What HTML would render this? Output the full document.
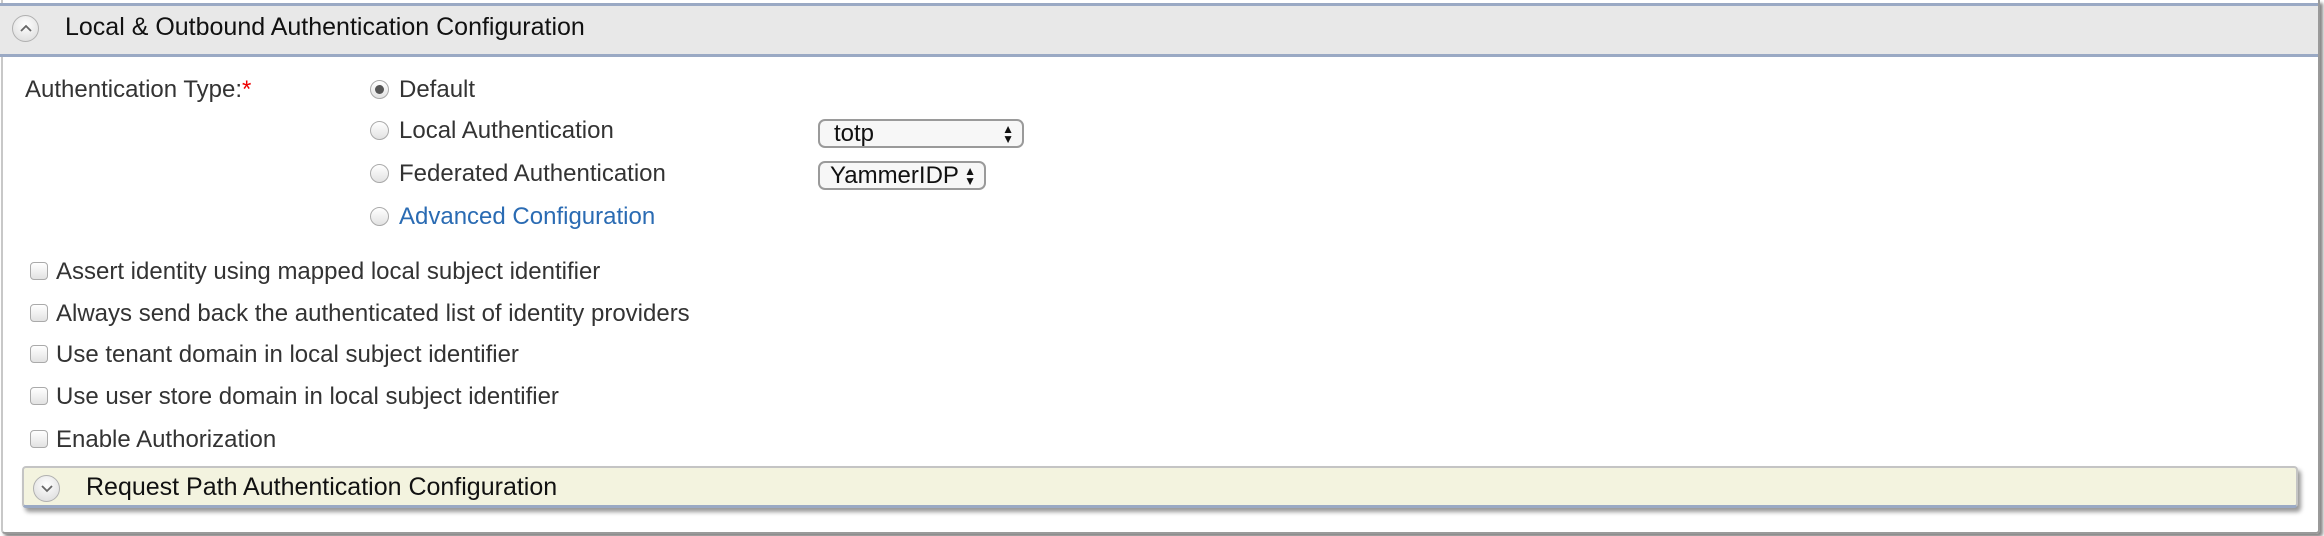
<!DOCTYPE html>
<html><head><style>
body{margin:0;width:2324px;height:536px;background:#fff;position:relative;overflow:hidden;font-family:"Liberation Sans",sans-serif;color:#333}
.box{position:absolute;left:1px;top:0;width:2315px;height:532px;border-left:2px solid #c8c8c8;border-right:2px solid #9a9a9a;border-bottom:2px solid #9a9a9a;box-shadow:3px 3px 3px #888;border-radius:0 0 4px 4px}
.hdr{position:absolute;left:0;top:3px;width:2318px;height:48px;background:#e8e8e8;border-top:3px solid #9aa9c4;border-bottom:3px solid #9aa9c4}
.t{position:absolute;white-space:nowrap;font-size:24px;line-height:1}
.circ{position:absolute;width:27px;height:27px;border-radius:50%;border:1px solid #b0b0b0;background:radial-gradient(circle at 50% 35%,#fff,#d8d8d8);box-sizing:border-box}
.circ svg{position:absolute;left:7px;top:8px}
.radio{position:absolute;left:370px;width:19px;height:19px;border-radius:50%;border:1px solid #aaa;box-sizing:border-box;background:linear-gradient(#fff,#e2e2e2)}
.cb{position:absolute;left:30px;width:18px;height:18px;border-radius:4px;border:1px solid #aaa;box-sizing:border-box;background:linear-gradient(#fff,#e2e2e2)}
.sel{position:absolute;left:818px;height:29px;border:2px solid #9a9a9a;border-radius:7px;box-sizing:border-box;background:#f7f7f7;font-size:24px;color:#111;padding-left:14px;line-height:25px}
.arr{position:absolute;right:8px;top:3px;font-size:12px;line-height:10px;color:#111}
.req{position:absolute;left:22px;top:466px;width:2276px;height:42px;background:#f3f3df;border:2px solid #c4c4c4;border-bottom:3px solid #9aa9c4;border-radius:4px;box-shadow:3px 4px 4px #999;box-sizing:border-box}
</style></head><body>
<div class="box"></div>
<div class="hdr"></div>
<div class="circ" style="left:12px;top:15px"><svg width="12" height="9"><path d="M1 7 L6 2 L11 7" stroke="#666" stroke-width="1.8" fill="none"/></svg></div>
<div class="t" style="left:65px;top:15px;font-size:25px;color:#111">Local &amp; Outbound Authentication Configuration</div>

<div class="t" style="left:25px;top:78px">Authentication Type:<span style="color:#e00">*</span></div>
<div class="radio" style="top:80px"><div style="position:absolute;left:4px;top:4px;width:9px;height:9px;border-radius:50%;background:#555"></div></div>
<div class="t" style="left:399px;top:78px">Default</div>
<div class="radio" style="top:121px"></div>
<div class="t" style="left:399px;top:119px">Local Authentication</div>
<div class="radio" style="top:164px"></div>
<div class="t" style="left:399px;top:162px">Federated Authentication</div>
<div class="radio" style="top:207px"></div>
<div class="t" style="left:399px;top:205px;color:#2a6bb3">Advanced Configuration</div>

<div class="sel" style="top:119px;width:206px">totp<div class="arr">▲<br>▼</div></div>
<div class="sel" style="top:161px;width:168px;padding-left:10px">YammerIDP<div class="arr">▲<br>▼</div></div>

<div class="cb" style="top:262px"></div><div class="t" style="left:56px;top:260px">Assert identity using mapped local subject identifier</div>
<div class="cb" style="top:304px"></div><div class="t" style="left:56px;top:302px">Always send back the authenticated list of identity providers</div>
<div class="cb" style="top:345px"></div><div class="t" style="left:56px;top:343px">Use tenant domain in local subject identifier</div>
<div class="cb" style="top:387px"></div><div class="t" style="left:56px;top:385px">Use user store domain in local subject identifier</div>
<div class="cb" style="top:430px"></div><div class="t" style="left:56px;top:428px">Enable Authorization</div>

<div class="req"></div>
<div class="circ" style="left:33px;top:475px"><svg width="12" height="9"><path d="M1 2 L6 7 L11 2" stroke="#666" stroke-width="1.8" fill="none"/></svg></div>
<div class="t" style="left:86px;top:475px;font-size:25px;color:#111">Request Path Authentication Configuration</div>
</body></html>
